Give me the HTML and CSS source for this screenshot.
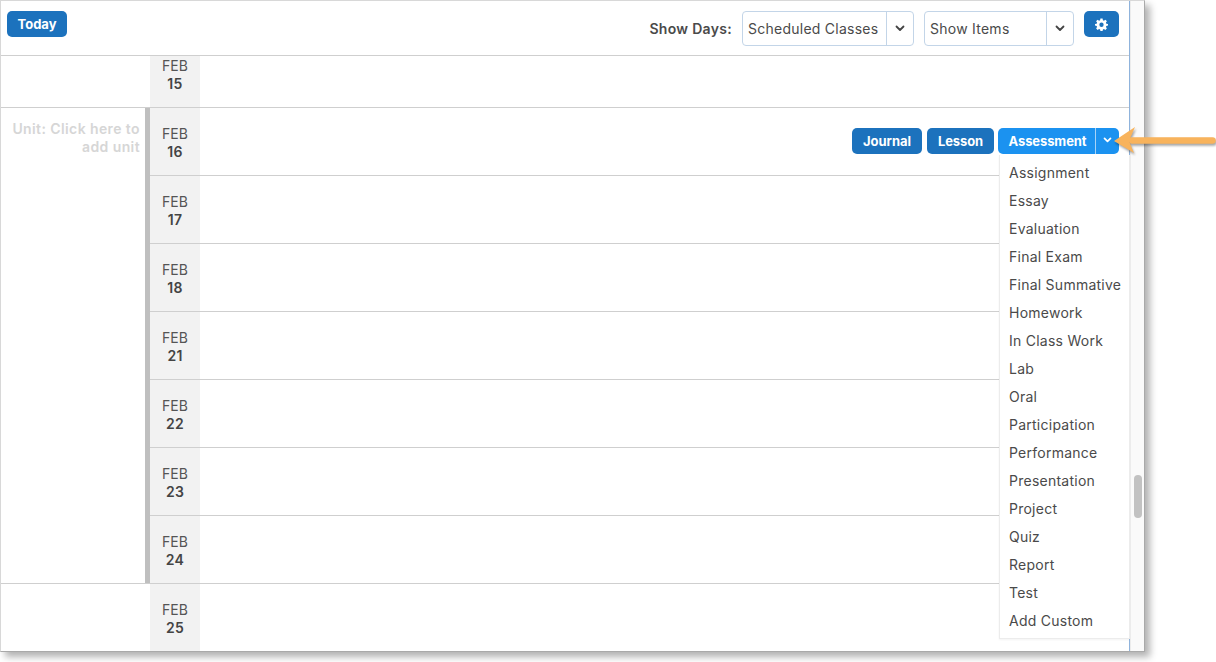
FILE: index.html
```html
<!DOCTYPE html>
<html lang="en">
<head>
<meta charset="utf-8">
<title>Planner</title>
<link rel="stylesheet" href="styles.css">
</head>
<body>
<div class="window">
  <div class="content">
    <header class="toolbar">
      <button class="btn today">Today</button>
      <div class="tools">
        <span class="show-label">Show Days:</span>
        <div class="select sel-days"><span class="sel-text">Scheduled Classes</span><span class="sel-arrow"><svg width="10" height="7" viewBox="0 0 10 7"><path d="M1.5 1.5 5 5l3.5-3.5" fill="none" stroke="#444" stroke-width="1.8" stroke-linecap="round" stroke-linejoin="round"/></svg></span></div>
        <div class="select sel-items"><span class="sel-text">Show Items</span><span class="sel-arrow"><svg width="10" height="7" viewBox="0 0 10 7"><path d="M1.5 1.5 5 5l3.5-3.5" fill="none" stroke="#444" stroke-width="1.8" stroke-linecap="round" stroke-linejoin="round"/></svg></span></div>
        <button class="btn gear"><svg width="13" height="13" viewBox="0 0 24 24"><path fill="#fff" fill-rule="evenodd" d="M10 1h4l.6 3.1 1.9.8L19.200 3.100 22 5.900 20.100 8.500l.8 1.900L24 11v3l-3.100.6-.8 1.900 1.900 2.600L19.200 22l-2.700-1.800-1.900.8L14 24h-4l-.6-3-1.900-.8L4.800 22 2 19.100l1.900-2.600-.8-1.900L0 14v-3l3.100-.6.800-1.900L2 5.900 4.800 3.100 7.500 4.900l1.900-.8zM12 8.500a4 4 0 1 0 0 8 4 4 0 0 0 0-8z"/></svg></button>
      </div>
    </header>

    <div class="row first">
      <div class="unit-cell"></div>
      <div class="date"><span>FEB</span><b>15</b></div>
      <div class="main"></div>
    </div>

    <div class="unit-group">
      <div class="unit-title">Unit: Click here to add unit</div>
      <div class="unit-days">
        <div class="row day">
          <div class="date"><span>FEB</span><b>16</b></div>
          <div class="main actions">
            <button class="btn small">Journal</button>
            <button class="btn small">Lesson</button>
            <div class="split">
              <span class="split-label">Assessment</span>
              <span class="split-arrow"><svg width="9" height="6" viewBox="0 0 10 7"><path d="M1.500 1.500 5 5l3.500-3.500" fill="none" stroke="#fff" stroke-width="2" stroke-linecap="round" stroke-linejoin="round"/></svg></span>
            </div>
          </div>
        </div>
        <div class="row day"><div class="date"><span>FEB</span><b>17</b></div><div class="main"></div></div>
        <div class="row day"><div class="date"><span>FEB</span><b>18</b></div><div class="main"></div></div>
        <div class="row day"><div class="date"><span>FEB</span><b>21</b></div><div class="main"></div></div>
        <div class="row day"><div class="date"><span>FEB</span><b>22</b></div><div class="main"></div></div>
        <div class="row day"><div class="date"><span>FEB</span><b>23</b></div><div class="main"></div></div>
        <div class="row day"><div class="date"><span>FEB</span><b>24</b></div><div class="main"></div></div>
      </div>
    </div>

    <div class="row last">
      <div class="unit-cell"></div>
      <div class="date"><span>FEB</span><b>25</b></div>
      <div class="main"></div>
    </div>

    <ul class="menu">
      <li>Assignment</li><li>Essay</li><li>Evaluation</li><li>Final Exam</li><li>Final Summative</li><li>Homework</li><li>In Class Work</li><li>Lab</li><li>Oral</li><li>Participation</li><li>Performance</li><li>Presentation</li><li>Project</li><li>Quiz</li><li>Report</li><li>Test</li><li>Add Custom</li>
    </ul>
  </div>
  <div class="gutter"><div class="thumb"></div></div>
</div>
<svg class="arrow" width="104" height="34" viewBox="0 0 104 34">
  <path d="M20 16.500H100.500" fill="none" stroke="#f8b35c" stroke-width="6.500" stroke-linecap="round"/>
  <path d="M2 17 23 3 17 17 22 29z" fill="#f8b35c"/>
</svg>
</body>
</html>
```
FILE: styles.css
```css
* { box-sizing: border-box; }
html, body { margin: 0; padding: 0; }
body {
  width: 1216px;
  height: 662px;
  background: #fff;
  overflow: hidden;
  position: relative;
  font-family: Inter, "Liberation Sans", sans-serif;
  color: #4a4a4a;
}
.window {
  width: 1145px;
  height: 652px;
  display: flex;
  border: 1px solid #d8d8d8;
  border-bottom-color: #a9a9a9;
  border-right-color: #a9a9a9;
  box-shadow: 5px 5px 7px rgba(0, 0, 0, .3);
  background: #fff;
}
.content {
  width: 1129px;
  position: relative;
  border-right: 1px solid #8fb3dc;
  display: flex;
  flex-direction: column;
}
.gutter {
  flex: 1;
  background: #fafafa;
  border-left: 1px solid #ececec;
  position: relative;
}
.thumb {
  position: absolute;
  top: 474px;
  left: 3px;
  width: 8px;
  height: 43px;
  border-radius: 4px;
  background: #c2c2c2;
}
.toolbar {
  height: 55px;
  flex: none;
  border-bottom: 1px solid #cfcfcf;
  display: flex;
  justify-content: space-between;
  align-items: flex-start;
  padding: 10px 10px 0 6px;
}
.btn {
  border: 0;
  background: #1c72bd;
  color: #fff;
  font-family: inherit;
  font-weight: 700;
  border-radius: 5px;
  padding: 0;
}
.today {
  width: 60px;
  height: 26px;
  font-size: 13px;
}
.tools { display: flex; align-items: flex-start; }
.show-label {
  font-size: 14px;
  font-weight: 600;
  letter-spacing: .3px;
  line-height: 36px;
  margin-right: 10px;
  color: #4a4a4a;
}
.select {
  height: 35px;
  display: flex;
  border: 1px solid #c3d5e8;
  border-radius: 4px;
  font-size: 14px;
  letter-spacing: .25px;
}
.sel-days { width: 172px; margin-right: 10px; }
.sel-items { width: 150px; margin-right: 10px; }
.sel-text { flex: 1; padding-left: 5px; line-height: 33px; white-space: nowrap; }
.sel-arrow {
  width: 27px;
  border-left: 1px solid #c3d5e8;
  display: flex;
  align-items: center;
  justify-content: center;
}
.gear {
  width: 35px;
  height: 26px;
  display: flex;
  align-items: center;
  justify-content: center;
}
.row { display: flex; border-bottom: 1px solid #cfcfcf; }
.first { height: 52px; flex: none; }
.first .date { padding-top: 1px; justify-content: flex-start; }
.last { flex: 1; border-bottom: 0; }
.last .date { padding-top: 2px; }
.unit-cell { width: 149px; flex: none; }
.date {
  width: 50px;
  flex: none;
  background: #f2f2f2;
  display: flex;
  flex-direction: column;
  align-items: center;
  justify-content: center;
  font-size: 14px;
  line-height: 18px;
}
.date span { color: #555; }
.date b { font-weight: 600; color: #444; letter-spacing: .3px; }
.day .date { padding-top: 2px; }
.main { flex: 1; }
.unit-group { display: flex; flex: none; border-bottom: 1px solid #cfcfcf; }
.unit-title {
  width: 149px;
  flex: none;
  border-right: 5px solid #bfbfbf;
  padding: 12px 5px 0 8px;
  font-size: 14px;
  font-weight: 600;
  letter-spacing: .4px;
  line-height: 18px;
  color: #d6d6d6;
  text-align: right;
}
.unit-days { flex: 1; }
.day { height: 68px; }
.day:last-child { height: 67px; border-bottom: 0; }
.actions {
  display: flex;
  justify-content: flex-end;
  align-items: flex-start;
  padding: 20px 10px 0 0;
  gap: 5px;
}
.small { height: 26px; font-size: 13px; width: 70px; }
.small + .small { width: 67px; margin-right: -1px; letter-spacing: -.1px; }
.split {
  width: 121px;
  height: 26px;
  display: flex;
  background: #1b92f0;
  color: #fff;
  font-size: 13px;
  font-weight: 700;
  letter-spacing: -.1px;
  border-radius: 5px;
}
.split-label { flex: 1; text-align: center; line-height: 26px; padding-left: 2px; }
.split-arrow {
  width: 24px;
  border-left: 1px solid #a7d3f7;
  display: flex;
  align-items: center;
  justify-content: center;
  padding-bottom: 2px;
}
.menu {
  position: absolute;
  top: 154px;
  left: 998px;
  width: 131px;
  height: 484px;
  margin: 0;
  padding: 4px 0 0;
  list-style: none;
  background: #fff;
  border: 1px solid #ececec;
  border-top: 0;
  box-shadow: 0 1px 2px rgba(0, 0, 0, .05);
  font-size: 14px;
  letter-spacing: .25px;
}
.menu li {
  height: 28px;
  line-height: 28px;
  padding-left: 9px;
  white-space: nowrap;
}
.arrow {
  position: absolute;
  left: 1112px;
  top: 124px;
  filter: drop-shadow(1px 2px 1px rgba(0, 0, 0, .35));
}
```
